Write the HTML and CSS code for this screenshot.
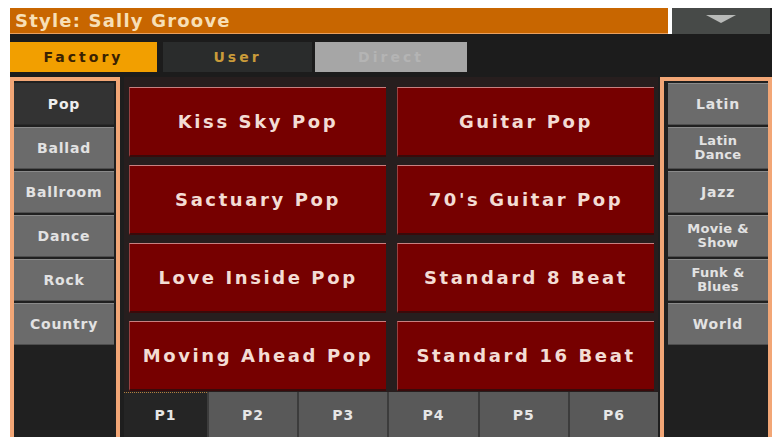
FILE: index.html
```html
<!DOCTYPE html>
<html lang="en">
<head>
  <meta charset="UTF-8">
  <title>Style Select</title>
  <link rel="stylesheet" href="styles.css">
</head>
<body>
  <div class="screen">
    <div class="title-row">
      <div class="title">Style: Sally Groove</div>
      <div class="dropdown"><span class="arrow"></span></div>
    </div>

    <div class="tab-row">
      <div class="tab factory">Factory</div>
      <div class="tab user">User</div>
      <div class="tab direct">Direct</div>
    </div>

    <div class="main">
      <div class="side left">
        <div class="side-btn selected">Pop</div>
        <div class="side-btn">Ballad</div>
        <div class="side-btn">Ballroom</div>
        <div class="side-btn">Dance</div>
        <div class="side-btn">Rock</div>
        <div class="side-btn">Country</div>
      </div>

      <div class="center">
        <div class="styles">
          <div class="style-btn">Kiss Sky Pop</div>
          <div class="style-btn">Guitar Pop</div>
          <div class="style-btn">Sactuary Pop</div>
          <div class="style-btn">70's Guitar Pop</div>
          <div class="style-btn">Love Inside Pop</div>
          <div class="style-btn">Standard 8 Beat</div>
          <div class="style-btn">Moving Ahead Pop</div>
          <div class="style-btn">Standard 16 Beat</div>
        </div>
        <div class="pages">
          <div class="page selected">P1</div>
          <div class="page">P2</div>
          <div class="page">P3</div>
          <div class="page">P4</div>
          <div class="page">P5</div>
          <div class="page">P6</div>
        </div>
      </div>

      <div class="side right">
        <div class="side-btn">Latin</div>
        <div class="side-btn two">Latin<br>Dance</div>
        <div class="side-btn">Jazz</div>
        <div class="side-btn two">Movie &amp;<br>Show</div>
        <div class="side-btn two">Funk &amp;<br>Blues</div>
        <div class="side-btn">World</div>
      </div>
    </div>
  </div>
</body>
</html>
```

FILE: styles.css
```css
body {
  margin: 0;
  background: #fff;
  font-family: 'DejaVu Sans', sans-serif;
  font-weight: bold;
  overflow: hidden;
}

.screen {
  width: 762px;
  height: 429px;
  margin: 8px 0 0 10px;
  background: #1e1e1e;
}

/* Title bar */
.title-row {
  display: flex;
  gap: 4px;
  height: 26px;
  margin-right: 2px;
  background: #fff;
}

.title {
  flex: 1;
  background: #c86600;
  color: #f7dfb6;
  font-size: 18px;
  letter-spacing: 1.2px;
  line-height: 26px;
  padding-left: 5px;
  border-bottom: 1px solid #e8a060;
}

.dropdown {
  width: 98px;
  background: #474a48;
  display: flex;
  justify-content: center;
  padding-top: 7px;
  box-sizing: border-box;
}

.arrow {
  width: 0;
  height: 0;
  border-left: 15px solid transparent;
  border-right: 15px solid transparent;
  border-top: 8px solid #b8bab8;
}

/* Factory / User tabs */
.tab-row {
  display: flex;
  height: 30px;
  padding: 8px 0 5px;
  background: #1c1c1c;
}

.tab {
  font-size: 14px;
  line-height: 30px;
  text-align: center;
  letter-spacing: 3px;
}

.factory {
  width: 147px;
  background: #f29f00;
  color: #3a2202;
}

.user {
  width: 149px;
  margin-left: 6px;
  background: #2a2c2c;
  color: #c99b3a;
}

.direct {
  width: 152px;
  margin-left: 3px;
  background: #a6a6a6;
  color: #b4b4b4;
}

/* Main area */
.main {
  display: flex;
  height: 360px;
}

.side {
  width: 100px;
  border: 4px solid #f2a676;
  border-bottom: none;
  padding: 2px 0 0;
  background: #202020;
}

.side.left {
  padding-right: 2px;
}

.side.right {
  padding-left: 4px;
  margin-left: 0;
}

.side-btn {
  height: 40px;
  margin-bottom: 2px;
  background: #6b6b6b;
  border-top: 1px solid #8a8a8a;
  border-bottom: 1px solid #4e4e4e;
  color: #e2e2e2;
  font-size: 14px;
  letter-spacing: 0.8px;
  display: flex;
  align-items: center;
  justify-content: center;
  text-align: center;
}

.side-btn.selected {
  background: #333;
  border-top-color: #333;
  border-bottom-color: #2a2a2a;
  color: #eee;
}

.side-btn.two {
  font-size: 13px;
  line-height: 14px;
  letter-spacing: 0.3px;
}

.center {
  flex: 1;
  display: flex;
  flex-direction: column;
  padding: 0 2px 0 4px;
}

.styles {
  flex: 1;
  display: grid;
  grid-template-columns: 1fr 1fr;
  grid-auto-rows: 70px;
  column-gap: 11px;
  row-gap: 8px;
  padding: 10px 4px 0 5px;
  background: #271e1e;
}

.style-btn {
  background: #760000;
  border-top: 1px solid #c88080;
  border-left: 1px solid #9a4040;
  border-bottom: 2px solid #3a0a0a;
  color: #f3dcd4;
  font-size: 18px;
  letter-spacing: 2.6px;
  display: flex;
  align-items: center;
  justify-content: center;
}

.pages {
  display: grid;
  grid-template-columns: 83px repeat(5, 1fr);
  height: 45px;
  background: #1e1e1e;
}

.page {
  background: #595959;
  border-left: 2px solid #3c3c3c;
  color: #e6e6e6;
  font-size: 14px;
  letter-spacing: 1px;
  display: flex;
  align-items: center;
  justify-content: center;
}

.page.selected {
  background: #252525;
  border-left: none;
  border-top: 1px dotted #b08040;
}
```
